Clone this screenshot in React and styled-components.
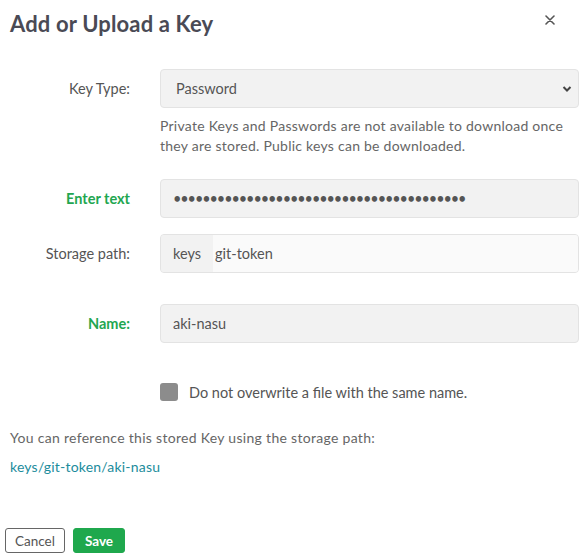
import React from "react";
import styled, { createGlobalStyle } from "styled-components";

const Global = createGlobalStyle`
  html, body { margin: 0; padding: 0; background: #fff; }
  body { font-family: Lato, "Open Sans", sans-serif; color: #555; }
  * { box-sizing: border-box; }
`;

const Modal = styled.div`
  width: 588px;
  height: 559px;
  padding: 0 9px 0 10px;
  display: flex;
  flex-direction: column;
`;

const Header = styled.div`
  display: flex;
  justify-content: space-between;
  align-items: flex-start;
  height: 69px;
  padding-top: 9px;
`;

const Title = styled.h2`
  margin: 0;
  font-size: 22px;
  line-height: 30px;
  font-weight: 700;
  color: #4a4a55;
  letter-spacing: 0.15px;
`;

const Close = styled.button`
  border: 0;
  background: none;
  padding: 0;
  margin: 4px 22px 0 0;
  width: 14px;
  height: 14px;
  display: flex;
  align-items: center;
  justify-content: center;
  cursor: pointer;
`;

const Row = styled.div`
  display: grid;
  grid-template-columns: 120px 1fr;
  column-gap: 30px;
  align-items: center;
  margin-top: ${(p) => p.$mt || 0}px;
`;

const Label = styled.label`
  text-align: right;
  font-size: 14.5px;
  font-weight: ${(p) => (p.$accent ? 700 : 400)};
  color: ${(p) => (p.$accent ? "#22a650" : "#555")};
`;

const Field = styled.div`
  position: relative;
  height: 39px;
  border: 1px solid #e3e3e3;
  border-radius: 4px;
  background: #f2f2f2;
  display: flex;
  align-items: stretch;
  overflow: hidden;
`;

const Select = styled.select`
  appearance: none;
  border: 0;
  background: transparent;
  width: 100%;
  padding: 0 15px;
  font: inherit;
  font-size: 14.5px;
  color: #555;
  outline: none;
`;

const Chevron = styled.svg`
  position: absolute;
  right: 6px;
  top: 15px;
  pointer-events: none;
`;

const Input = styled.input`
  border: 0;
  background: ${(p) => (p.$light ? "#fafafa" : "transparent")};
  flex: 1;
  padding: 0 ${(p) => (p.$tight ? 2 : 12)}px;
  font: inherit;
  font-size: 14.5px;
  color: #555;
  outline: none;
  min-width: 0;
  letter-spacing: ${(p) => p.$ls || "normal"};
`;

const Prefix = styled.span`
  display: flex;
  align-items: center;
  padding: 0 12px 0 12px;
  font-size: 14.5px;
  color: #555;
  background: #f2f2f2;
`;

const Help = styled.p`
  grid-column: 2;
  margin: 8px 0 0;
  font-size: 14px;
  line-height: 19.5px;
  letter-spacing: 0.25px;
  color: #666;
`;

const CheckRow = styled.label`
  display: flex;
  align-items: center;
  gap: 11px;
  margin: 40px 0 0 150px;
  font-size: 14.5px;
  color: #555;
`;

const Box = styled.span`
  width: 18px;
  height: 18px;
  border-radius: 3px;
  background: #8c8c8c;
`;

const Note = styled.p`
  margin: ${(p) => p.$mt}px 0 0;
  font-size: 14px;
  line-height: 20px;
  letter-spacing: ${(p) => (p.$link ? 0.2 : 0.3)}px;
  color: ${(p) => (p.$link ? "#1c8c9c" : "#666")};
`;

const Footer = styled.div`
  display: flex;
  gap: 8px;
  margin: auto 0 6px -5px;
`;

const Button = styled.button`
  height: 25px;
  padding: 0 ${(p) => (p.$primary ? 11 : 9)}px;
  border-radius: 3px;
  font: inherit;
  font-size: 13.5px;
  font-weight: ${(p) => (p.$primary ? 700 : 400)};
  color: ${(p) => (p.$primary ? "#fff" : "#555")};
  background: ${(p) => (p.$primary ? "#1fa84d" : "#fff")};
  border: 1px solid ${(p) => (p.$primary ? "#1fa84d" : "#666")};
  cursor: pointer;
`;

export default function App() {
  return (
    <>
      <Global />
      <Modal>
        <Header>
          <Title>Add or Upload a Key</Title>
          <Close aria-label="Close">
            <svg width="10" height="10" viewBox="0 0 10 10">
              <path d="M1 1L9 9M9 1L1 9" stroke="#555" strokeWidth="1.6" strokeLinecap="round" />
            </svg>
          </Close>
        </Header>

        <Row>
          <Label>Key Type:</Label>
          <Field>
            <Select defaultValue="password">
              <option value="private">Private Key</option>
              <option value="public">Public Key</option>
              <option value="password">Password</option>
            </Select>
            <Chevron width="10" height="8" viewBox="0 0 10 8">
              <path d="M1.5 2L5 5.5L8.5 2" stroke="#444" strokeWidth="2" fill="none" />
            </Chevron>
          </Field>
          <Help>
            Private Keys and Passwords are not available to download once they are stored. Public keys can be downloaded.
          </Help>
        </Row>

        <Row $mt={24}>
          <Label $accent>Enter text</Label>
          <Field>
            <Input type="password" defaultValue={"x".repeat(40)} $ls="-1.1px" />
          </Field>
        </Row>

        <Row $mt={16}>
          <Label>Storage path:</Label>
          <Field>
            <Prefix>keys</Prefix>
            <Input $light $tight defaultValue="git-token" />
          </Field>
        </Row>

        <Row $mt={31}>
          <Label $accent>Name:</Label>
          <Field>
            <Input defaultValue="aki-nasu" />
          </Field>
        </Row>

        <CheckRow>
          <Box />
          Do not overwrite a file with the same name.
        </CheckRow>

        <Note $mt={27}>You can reference this stored Key using the storage path:</Note>
        <Note $mt={9} $link>keys/git-token/aki-nasu</Note>

        <Footer>
          <Button>Cancel</Button>
          <Button $primary>Save</Button>
        </Footer>
      </Modal>
    </>
  );
}
